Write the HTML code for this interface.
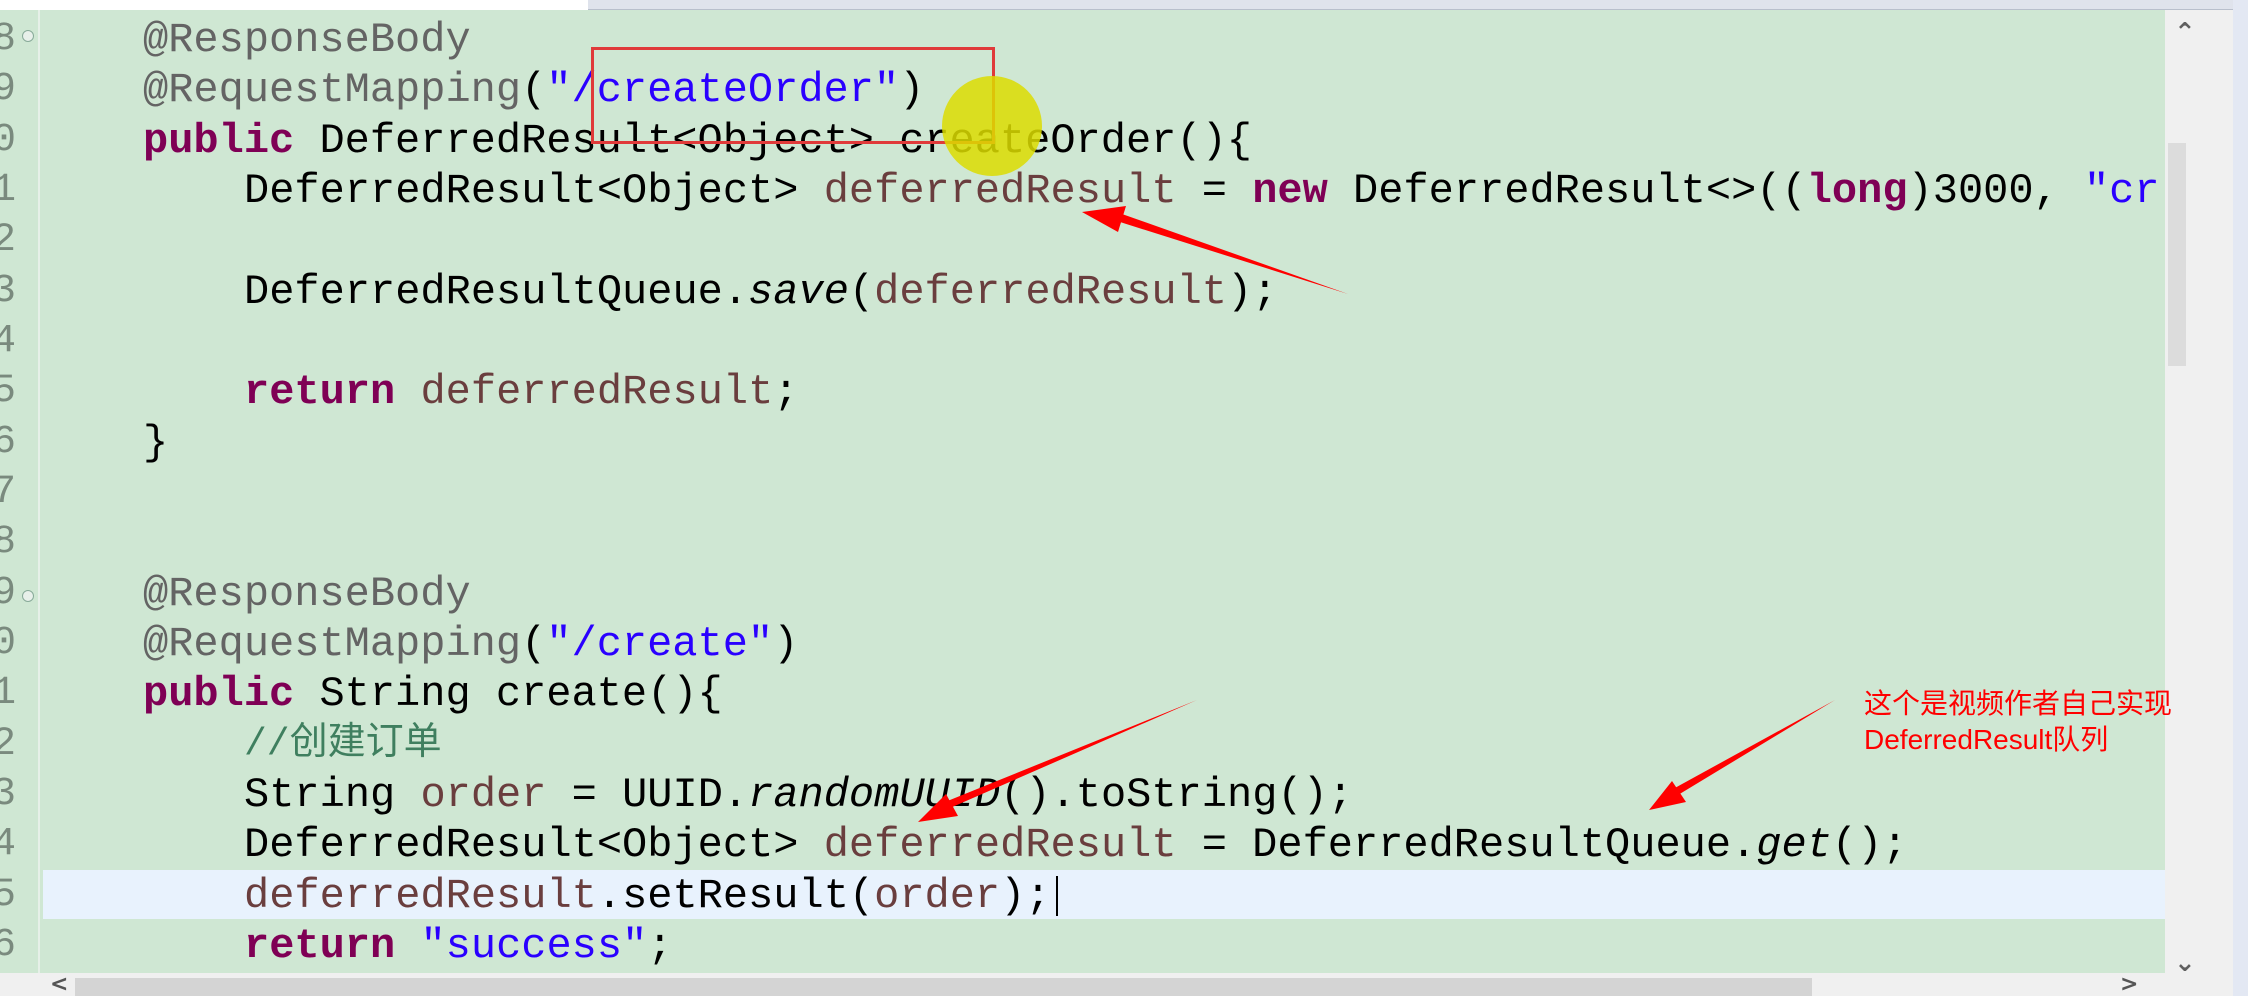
<!DOCTYPE html>
<html><head><meta charset="utf-8"><style>
body{margin:0;width:2248px;height:996px;overflow:hidden;background:#fff;position:relative;font-family:"Liberation Mono","Noto Sans CJK SC",monospace;}
#ed{position:absolute;left:0;top:10px;width:2165px;height:963px;background:#cfe7d3;overflow:hidden}
.ln{position:absolute;left:0;width:2165px;height:50px;line-height:50px;font-size:42px;white-space:pre;color:#000}
.num{position:absolute;left:-10px;width:26px;text-align:right;color:#7a8a7e;font-size:40px}
.a{color:#646464}.k{color:#7f0055;font-weight:bold}.s{color:#2a00ff}.v{color:#6a3e3e}.c{color:#3f7f5f}.i{font-style:italic}
</style></head><body>
<div style="position:absolute;left:588px;top:0;width:1660px;height:9px;background:#dfe3ec;border-bottom:1px solid #b8bfcc"></div>
<div id="ed">
<div style="position:absolute;left:38px;top:0;width:2px;height:963px;background:#e6f0e8"></div>
<div style="position:absolute;left:43px;top:860px;width:2122px;height:49px;background:#e8f2fd"></div>
</div>
<div id="code" style="position:absolute;left:0;top:0">
<div class="ln" style="top:15px"><span class="num">8</span>    <span style="position:absolute;left:143px" class="a">@ResponseBody</span></div>
<div class="ln" style="top:65px"><span class="num">9</span><span style="position:absolute;left:143px"><span class="a">@RequestMapping</span>(<span class="s">"/createOrder"</span>)</span></div>
<div class="ln" style="top:116px"><span class="num">0</span><span style="position:absolute;left:143px"><span class="k">public</span> DeferredResult&lt;Object&gt; createOrder(){</span></div>
<div class="ln" style="top:166px"><span class="num">1</span><span style="position:absolute;left:244px">DeferredResult&lt;Object&gt; <span class="v">deferredResult</span> = <span class="k">new</span> DeferredResult&lt;&gt;((<span class="k">long</span>)3000, <span class="s">"cr</span></span></div>
<div class="ln" style="top:216px"><span class="num">2</span></div>
<div class="ln" style="top:267px"><span class="num">3</span><span style="position:absolute;left:244px">DeferredResultQueue.<span class="i">save</span>(<span class="v">deferredResult</span>);</span></div>
<div class="ln" style="top:317px"><span class="num">4</span></div>
<div class="ln" style="top:367px"><span class="num">5</span><span style="position:absolute;left:244px"><span class="k">return</span> <span class="v">deferredResult</span>;</span></div>
<div class="ln" style="top:418px"><span class="num">6</span><span style="position:absolute;left:143px">}</span></div>
<div class="ln" style="top:468px"><span class="num">7</span></div>
<div class="ln" style="top:518px"><span class="num">8</span></div>
<div class="ln" style="top:569px"><span class="num">9</span><span style="position:absolute;left:143px" class="a">@ResponseBody</span></div>
<div class="ln" style="top:619px"><span class="num">0</span><span style="position:absolute;left:143px"><span class="a">@RequestMapping</span>(<span class="s">"/create"</span>)</span></div>
<div class="ln" style="top:669px"><span class="num">1</span><span style="position:absolute;left:143px"><span class="k">public</span> String create(){</span></div>
<div class="ln" style="top:720px"><span class="num">2</span><span style="position:absolute;left:244px;font-size:38px" class="c">//创建订单</span></div>
<div class="ln" style="top:770px"><span class="num">3</span><span style="position:absolute;left:244px">String <span class="v">order</span> = UUID.<span class="i">randomUUID</span>().toString();</span></div>
<div class="ln" style="top:820px"><span class="num">4</span><span style="position:absolute;left:244px">DeferredResult&lt;Object&gt; <span class="v">deferredResult</span> = DeferredResultQueue.<span class="i">get</span>();</span></div>
<div class="ln" style="top:871px"><span class="num">5</span><span style="position:absolute;left:244px"><span class="v">deferredResult</span>.setResult(<span class="v">order</span>);</span></div>
<div class="ln" style="top:921px"><span class="num">6</span><span style="position:absolute;left:244px"><span class="k">return</span> <span class="s">"success"</span>;</span></div>
</div>
<div style="position:absolute;left:1056px;top:876px;width:2px;height:40px;background:#000"></div>
<div style="position:absolute;left:22px;top:590px;width:10px;height:10px;border:1px solid #8a9;border-radius:50%;background:#e8f0ea"></div>
<div style="position:absolute;left:22px;top:30px;width:10px;height:10px;border:1px solid #8a9;border-radius:50%;background:#e8f0ea"></div>
<!-- scrollbars -->
<div style="position:absolute;left:2165px;top:10px;width:68px;height:986px;background:#f0f0f0"></div>
<div style="position:absolute;left:2233px;top:0;width:15px;height:996px;background:#e3e8f3"></div>
<div style="position:absolute;left:2168px;top:143px;width:18px;height:223px;background:#dcdcdc"></div>
<div style="position:absolute;left:2174px;top:18px;font:bold 26px 'DejaVu Sans';color:#606060">&#8963;</div>
<div style="position:absolute;left:2174px;top:948px;font:bold 26px 'DejaVu Sans';color:#606060">&#8964;</div>
<div style="position:absolute;left:0;top:973px;width:2165px;height:23px;background:#f0f0f0"></div>
<div style="position:absolute;left:75px;top:978px;width:1737px;height:18px;background:#d4d4d4"></div>
<div style="position:absolute;left:50px;top:972px;font:bold 22px 'DejaVu Sans';color:#555">&lt;</div>
<div style="position:absolute;left:2120px;top:972px;font:bold 22px 'DejaVu Sans';color:#555">&gt;</div>
<!-- annotations -->
<div style="position:absolute;left:591px;top:47px;width:398px;height:91px;border:3px solid #e03a3a"></div>
<div style="position:absolute;left:942px;top:76px;width:100px;height:100px;border-radius:50%;background:rgba(220,220,0,0.85)"></div>
<svg style="position:absolute;left:0;top:0" width="2248" height="996">
<g fill="#ff0000">
<polygon points="1348,294 1120,222 1122,214"/><polygon points="1082,212 1126,206 1118,232"/>
<polygon points="1197,700 950,808 945,802"/><polygon points="918,822 946,794 958,816"/>
<polygon points="1835,700 1678,795 1673,789"/><polygon points="1649,810 1672,781 1686,802"/>
</g></svg>
<div style="position:absolute;left:1864px;top:686px;font:28px 'Liberation Sans','Noto Sans CJK SC',sans-serif;color:#f00;line-height:36px;white-space:nowrap">这个是视频作者自己实现<br>DeferredResult队列</div>
</body></html>
